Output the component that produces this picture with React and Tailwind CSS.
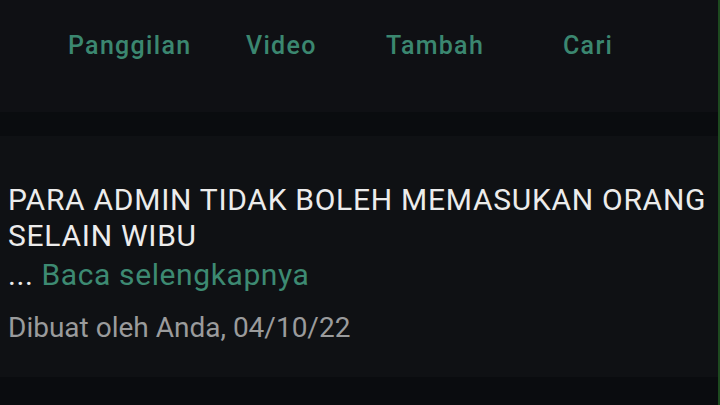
export default function App() {
  const tab = "absolute top-[31px] text-[25px] leading-[30px] font-medium tracking-[1.3px] text-[#3b8770]";
  return (
    <div className="w-[720px] h-[405px] bg-[#0a0c0f] flex overflow-hidden" style={{ fontFamily: "Roboto, 'Liberation Sans', sans-serif" }}>
      <div className="flex-1 flex flex-col">
        <div className="h-[112px] bg-[#0f1014] relative">
          <span className={`${tab} left-[68px]`}>Panggilan</span>
          <span className={`${tab} left-[246px]`}>Video</span>
          <span className={`${tab} left-[386px]`}>Tambah</span>
          <span className={`${tab} left-[563px]`}>Cari</span>
        </div>
        <div className="h-[24px]" />
        <div className="h-[241px] bg-[#0f1114] pl-[8px] pt-[46px]">
          <div className="text-[30px] leading-[36px] tracking-[0.72px] text-[#ececec] whitespace-nowrap">PARA ADMIN TIDAK BOLEH MEMASUKAN ORANG<br />SELAIN WIBU</div>
          <div className="mt-[3px] text-[30px] leading-[36px] tracking-[0.6px] text-[#ececec]">... <span className="text-[#3d8a72]">Baca selengkapnya</span></div>
          <div className="mt-[18px] text-[28px] leading-[34px] text-[#9a9b9c]">Dibuat oleh Anda, 04/10/22</div>
        </div>
      </div>
      <div className="w-[2px] bg-[#1d4a1f]" />
    </div>
  );
}
